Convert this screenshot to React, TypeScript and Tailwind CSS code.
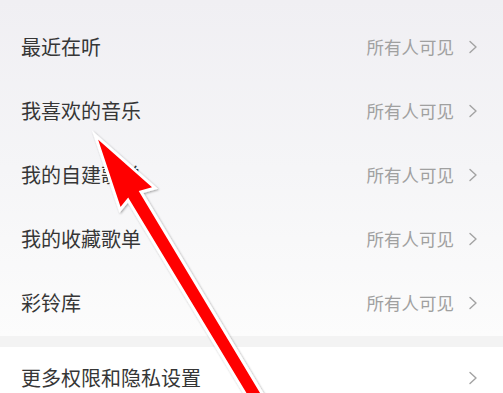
import React from "react";

const rows = ["最近在听", "我喜欢的音乐", "我的自建歌单", "我的收藏歌单", "彩铃库"];

function Chevron() {
  return (
    <svg width="10" height="14" viewBox="0 0 10 14" className="shrink-0">
      <path d="M2 1.5 L8 7 L2 12.5" fill="none" stroke="#a3a3a3" strokeWidth="1.4" strokeLinecap="round" strokeLinejoin="round" />
    </svg>
  );
}

export default function App() {
  return (
    <div
      className="relative w-[503px] h-[393px] overflow-hidden bg-white"
      style={{ fontFamily: '"Noto Sans CJK SC", "Noto Sans", sans-serif' }}
    >
      <div className="bg-gradient-to-b from-[#f0eff3] via-[#f5f5f7] to-[#fcfcfc] pt-[15px] h-[336px]">
        {rows.map((r) => (
          <div key={r} className="flex items-center h-[64px] pl-[21px] pr-[25px]">
            <span className="flex-1 text-[20px] leading-none text-[#363636]">{r}</span>
            <span className="text-[17.5px] leading-none text-[#a0a0a0] mr-[14px]">所有人可见</span>
            <Chevron />
          </div>
        ))}
      </div>
      <div className="h-[11px] bg-[#f3f3f3]" />
      <div className="flex items-center h-[62px] pl-[21px] pr-[25px]">
        <span className="flex-1 text-[20px] leading-none text-[#363636]">更多权限和隐私设置</span>
        <Chevron />
      </div>

      <svg
        className="absolute inset-0 pointer-events-none"
        width="503"
        height="393"
        viewBox="0 0 503 393"
      >
        <defs>
          <filter id="sh" x="-20%" y="-20%" width="140%" height="140%">
            <feDropShadow dx="1" dy="1" stdDeviation="1" floodColor="#000" floodOpacity="0.35" />
          </filter>
        </defs>
        <polygon
          points="95,135 155,188 141,192 272,410 255,410 128,200 120,210"
          fill="#ff0000"
          stroke="#ffffff"
          strokeWidth="3"
          strokeLinejoin="miter"
          filter="url(#sh)"
        />
      </svg>
    </div>
  );
}
